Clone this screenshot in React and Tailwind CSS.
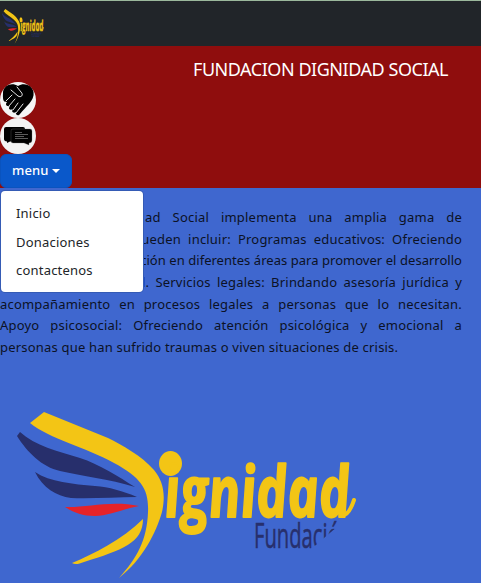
function Logo({ className, id }) {
  return (
    <svg viewBox="17 412 340 167" preserveAspectRatio="none" className={className} aria-label="Dignidad Fundación">
      <defs>
        <clipPath id={id}>
          <path d="M250 515H342L338 526L310 550H250Z" />
        </clipPath>
      </defs>
      <path fill="#f3c515" d="M44 412L30 423C50 439 85 447 114 463C142 478 149 490 148 512C147 540 137 558 119 578C143 559 156 533 162 512C166 494 163 481 154 470C142 456 122 445 108 438Z" />
      <path fill="#272f6c" d="M20 432L17 436C27 452 42 467 60 471C82 476 109 479 135 487C119 477 99 464 80 458C58 451 35 446 20 432Z" />
      <path fill="#272f6c" d="M35 472C43 488 56 496 71 498C91 499 116 497 137 497C123 491 109 487 95 486C73 484 50 482 35 472Z" />
      <path fill="#e52329" d="M65 507C86 508 111 500 139 506C123 509 108 516 95 516C82 516 73 512 65 507Z" />
      <path fill="#f3c515" d="M143 519C122 540 93 554 72 563C75 565 79 564 84 562C122 550 143 543 143 519Z" />
      <ellipse cx="170.500" cy="463.500" rx="11.500" ry="12.500" fill="#f3c515" />
      <text x="0" y="0" transform="translate(166 517) skewX(5)" textLength="186" lengthAdjust="spacingAndGlyphs" fill="#f3c515" stroke="#f3c515" strokeWidth="1.800" strokeLinejoin="round" className="font-['Open_Sans',sans-serif] text-[71px] font-bold italic">ignidad</text>
      <path d="M343 515Q349 515 354 500" fill="none" stroke="#f3c515" strokeWidth="4" strokeLinecap="round" />
      <g clipPath={`url(#${id})`}>
        <text x="254" y="548" textLength="98" lengthAdjust="spacingAndGlyphs" fill="#272f6c" stroke="#272f6c" strokeWidth=".5" className="font-['Open_Sans',sans-serif] text-[34px]">Fundación</text>
      </g>
    </svg>
  );
}

function HandsIcon() {
  return (
    <svg viewBox="0 0 36 36" className="block size-9">
      <circle cx="18" cy="18" r="18" fill="#f5f5f5" />
      <path d="M3 10C4 3 12 0 18 4C24 0 32 3 33.500 10C35 19 25 25 20 32C18 35 15 32 16 30C13 32 11 29 13 27C9 29 8 26 10 24C6 25 5 22 7 20C2 21 3 14 3 10Z" />
      <path d="M6 19L12 13M9 24L15 17M13 28L18 21M16 31L23 22M11 8L18 14C21 16 24 13 21 10L17 5" fill="none" stroke="#e5e5e5" strokeWidth="1" strokeLinecap="round" />
    </svg>
  );
}

function ChatIcon() {
  return (
    <svg viewBox="0 0 36 36" className="block size-9">
      <circle cx="18" cy="18" r="18" fill="#f3f3f3" />
      <path d="M6 9H23Q25 9 25 11V22Q25 23.500 23 23.500H10L7 25V23.500Q4 23 4 21V11Q4 9 6 9Z" />
      <path d="M13 11H30Q32 11 32 13V22Q32 25 29 25L29 27L24 25H13Q11 25 11 23V13Q11 11 13 11Z" stroke="#777" strokeWidth=".3" />
      <path d="M15 14.500H22M15 16.500H28M15 18.500H24M15 20.500H28" stroke="#999" strokeWidth=".6" />
    </svg>
  );
}

const lines = [
  "La Fundación Dignidad Social implementa una amplia gama de",
  "organizaciones que pueden incluir: Programas educativos: Ofreciendo",
  "programas de capacitación en diferentes áreas para promover el desarrollo",
  "personal y profesional. Servicios legales: Brindando asesoría jurídica y",
  "acompañamiento en procesos legales a personas que lo necesitan.",
  "Apoyo psicosocial: Ofreciendo atención psicológica y emocional a",
];

export default function App() {
  return (
    <div className="h-[583px] w-full overflow-hidden bg-[#3f67cf] font-['Noto_Sans',sans-serif] text-[#212529]">
      <header className="h-[46px] border-t border-[#9bb89c] bg-[#212529] pt-2 pl-0.5">
        <Logo id="brand-clip" className="h-[35px] w-[42px]" />
      </header>
      <section className="h-[142px] bg-[#8f0d0d] pt-2">
        <h1 className="mr-[34px] ml-auto h-7 w-[254px] text-[18px] leading-[30px] tracking-[-0.46px] whitespace-nowrap text-white">FUNDACION DIGNIDAD SOCIAL</h1>
        <HandsIcon />
        <ChatIcon />
        <div className="relative w-[72px]">
          <button className="flex h-[34px] w-[72px] items-center gap-1 rounded-md border border-[#0a53be] bg-[#0a58ca] pl-[11px] text-[13px] font-medium tracking-[0.1px] text-white">
            menu
            <span className="border-x-4 border-t-4 border-x-transparent border-t-white" />
          </button>
          <nav className="absolute top-[37px] left-px flex h-[101px] w-[142px] flex-col rounded-[4px] bg-white pt-2 pl-[15px] text-[13px] leading-[28.500px] tracking-[0.2px] shadow-[0_0_0_1px_#355bb5]">
            <a>Inicio</a>
            <a>Donaciones</a>
            <a>contactenos</a>
          </nav>
        </div>
      </section>
      <main>
        <p className="w-[462px] pt-[19px] text-[13px] leading-[21.670px] tracking-[0.2px] text-[#0c1226]">
          {lines.map((line, i) => (
            <span key={line} className={`block whitespace-nowrap [text-align-last:justify] ${i === 2 ? "tracking-[0.02px]" : ""}`}>{line}</span>
          ))}
          <span className="block w-[398px] whitespace-nowrap [text-align-last:justify]">personas que han sufrido traumas o viven situaciones de crisis.</span>
        </p>
        <Logo id="hero-clip" className="mt-[53px] ml-[17px] h-[167px] w-[340px]" />
      </main>
    </div>
  );
}
